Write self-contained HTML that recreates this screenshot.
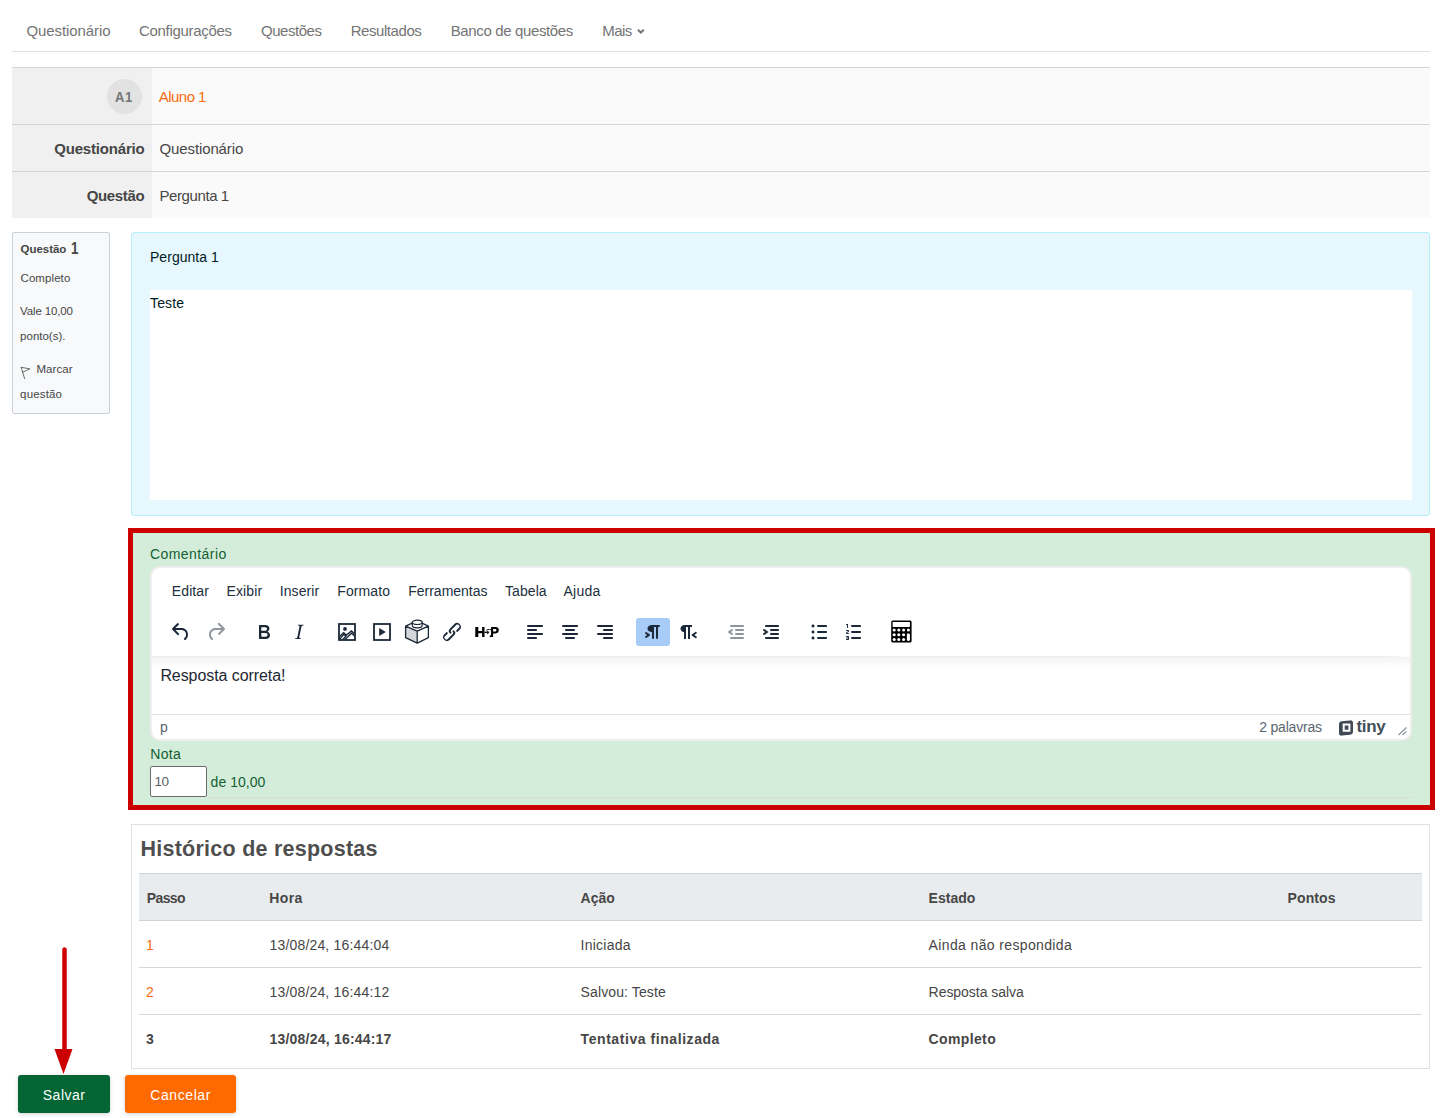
<!DOCTYPE html>
<html><head><meta charset="utf-8">
<style>
*{box-sizing:border-box;margin:0;padding:0}
html,body{width:1440px;height:1118px;overflow:hidden;background:#fff}
body{font-family:"Liberation Sans",sans-serif;position:relative}
.a{position:absolute}
.t{position:absolute;white-space:nowrap;line-height:1}
svg.a{overflow:visible}
</style></head><body>
<span class="t" style="left:26.50px;top:22.70px;font-size:15px;color:#747474;letter-spacing:-0.095px;">Questionário</span>
<span class="t" style="left:139.00px;top:22.70px;font-size:15px;color:#747474;letter-spacing:-0.310px;">Configurações</span>
<span class="t" style="left:261.00px;top:22.70px;font-size:15px;color:#747474;letter-spacing:-0.458px;">Questões</span>
<span class="t" style="left:350.70px;top:22.70px;font-size:15px;color:#747474;letter-spacing:-0.438px;">Resultados</span>
<span class="t" style="left:450.70px;top:22.70px;font-size:15px;color:#747474;letter-spacing:-0.364px;">Banco de questões</span>
<span class="t" style="left:602.20px;top:22.70px;font-size:15px;color:#747474;letter-spacing:-0.557px;">Mais</span>
<svg class="a" style="left:637px;top:28px" width="8" height="7" viewBox="0 0 8 7"><path d="M0.9 1.7 L3.85 4.6 L6.8 1.7" fill="none" stroke="#777" stroke-width="2.1"/></svg>
<div class="a" style="left:12px;top:51px;width:1418px;height:1px;background:#dee2e6"></div>
<div class="a" style="left:12px;top:67px;width:140px;height:57px;background:#f0f0f0"></div><div class="a" style="left:152px;top:67px;width:1278px;height:57px;background:#fafafa"></div>
<div class="a" style="left:12px;top:124px;width:140px;height:47px;background:#f0f0f0"></div><div class="a" style="left:152px;top:124px;width:1278px;height:47px;background:#fafafa"></div>
<div class="a" style="left:12px;top:171px;width:140px;height:47px;background:#f0f0f0"></div><div class="a" style="left:152px;top:171px;width:1278px;height:47px;background:#fafafa"></div>
<div class="a" style="left:12px;top:67px;width:1418px;height:1px;background:#d2d6da"></div>
<div class="a" style="left:12px;top:124px;width:1418px;height:1px;background:#d2d6da"></div>
<div class="a" style="left:12px;top:171px;width:1418px;height:1px;background:#d2d6da"></div>
<div class="a" style="left:107px;top:79px;width:35px;height:35px;border-radius:50%;background:#e2e2e2"></div>
<span class="t" style="left:115.00px;top:90.05px;font-size:14px;color:#747474;font-weight:bold;letter-spacing:-1.297px;transform:scaleX(0.93);transform-origin:0 0;letter-spacing:0.6px">A1</span>
<span class="t" style="left:158.80px;top:89.20px;font-size:15px;color:#f76c10;letter-spacing:-0.546px;">Aluno 1</span>
<span class="t" style="left:54.20px;top:140.80px;font-size:15px;color:#464646;font-weight:bold;letter-spacing:-0.183px;">Questionário</span>
<span class="t" style="left:159.50px;top:140.80px;font-size:15px;color:#464646;letter-spacing:-0.114px;">Questionário</span>
<span class="t" style="left:86.70px;top:188.10px;font-size:15px;color:#464646;font-weight:bold;letter-spacing:-0.336px;">Questão</span>
<span class="t" style="left:159.50px;top:188.10px;font-size:15px;color:#464646;letter-spacing:-0.410px;">Pergunta 1</span>
<div class="a" style="left:12px;top:232px;width:98px;height:182px;background:#f8f9fa;border:1px solid #cad0d7;border-radius:2px"></div>
<span class="t" style="left:20.50px;top:244.26px;font-size:11.5px;color:#464646;font-weight:bold;letter-spacing:-0.019px;">Questão</span>
<span class="t" style="left:71.10px;top:239.81px;font-size:17px;color:#464646;font-weight:bold;transform:scaleX(0.78);transform-origin:0 0;">1</span>
<span class="t" style="left:20.50px;top:272.86px;font-size:11.5px;color:#464646;letter-spacing:0.083px;">Completo</span>
<span class="t" style="left:20.10px;top:305.86px;font-size:11.5px;color:#464646;letter-spacing:-0.137px;">Vale 10,00</span>
<span class="t" style="left:20.10px;top:330.76px;font-size:11.5px;color:#464646;">ponto(s).</span>
<span class="t" style="left:36.40px;top:363.66px;font-size:11.5px;color:#464646;letter-spacing:0.104px;">Marcar</span>
<span class="t" style="left:20.10px;top:388.66px;font-size:11.5px;color:#464646;letter-spacing:0.163px;">questão</span>
<svg class="a" style="left:20px;top:366px" width="12" height="14" viewBox="0 0 12 14"><path d="M1.2 1.3 L4.6 12.6 M1.2 1.3 L9.9 2.9 L2.6 6.2" fill="none" stroke="#555" stroke-width="0.85" stroke-linejoin="round" stroke-linecap="round"/></svg>
<div class="a" style="left:131px;top:232px;width:1299px;height:284px;background:#e6f8fd;border:1px solid #b5effa;border-radius:3px"></div>
<div class="a" style="left:150px;top:290px;width:1262px;height:210px;background:#fff"></div>
<span class="t" style="left:150.00px;top:250.15px;font-size:14px;color:#001a1e;letter-spacing:0.034px;">Pergunta 1</span>
<span class="t" style="left:150.00px;top:295.75px;font-size:14px;color:#001a1e;letter-spacing:0.160px;">Teste</span>
<div class="a" style="left:131px;top:530px;width:1299px;height:277px;background:#d4ecda"></div>
<span class="t" style="left:150.00px;top:546.90px;font-size:14px;color:#155f33;letter-spacing:0.432px;">Comentário</span>
<div class="a" style="left:150px;top:566px;width:1262px;height:175px;background:#fff;border:2px solid #eeeeee;border-radius:10px"></div>
<span class="t" style="left:171.80px;top:583.95px;font-size:14px;color:#222f3e;letter-spacing:0.105px;">Editar</span>
<span class="t" style="left:226.50px;top:583.95px;font-size:14px;color:#222f3e;letter-spacing:0.139px;">Exibir</span>
<span class="t" style="left:279.80px;top:583.95px;font-size:14px;color:#222f3e;letter-spacing:0.067px;">Inserir</span>
<span class="t" style="left:337.30px;top:583.95px;font-size:14px;color:#222f3e;letter-spacing:0.096px;">Formato</span>
<span class="t" style="left:408.20px;top:583.95px;font-size:14px;color:#222f3e;">Ferramentas</span>
<span class="t" style="left:505.00px;top:583.95px;font-size:14px;color:#222f3e;letter-spacing:0.069px;">Tabela</span>
<span class="t" style="left:563.50px;top:583.95px;font-size:14px;color:#222f3e;letter-spacing:0.248px;">Ajuda</span>
<div class="a" style="left:152px;top:656px;width:1258px;height:1px;background:linear-gradient(90deg,rgba(34,47,62,.09) 0,rgba(34,47,62,.09) 98%,rgba(34,47,62,0))"></div>
<div class="a" style="left:152px;top:657px;width:1258px;height:10px;background:linear-gradient(rgba(34,47,62,.06),rgba(34,47,62,0))"></div>
<span class="t" style="left:160.40px;top:668.25px;font-size:16px;color:#1e2833;letter-spacing:-0.080px;">Resposta correta!</span>
<div class="a" style="left:152px;top:714px;width:1258px;height:1px;background:#e3e3e3"></div>
<span class="t" style="left:160.00px;top:719.85px;font-size:14px;color:#5b6670;">p</span>
<span class="t" style="left:1259.20px;top:719.75px;font-size:14px;color:#5b6670;letter-spacing:-0.199px;">2 palavras</span>
<svg class="a" style="left:1338px;top:720px" width="16" height="16" viewBox="0 0 16 16"><path d="M3.8 1.3 L12 0.4 Q15 0.1 15 3.1 L15 11.6 Q15 14.4 12.2 14.7 L4 15.6 Q1 15.9 1 12.9 L1 4.4 Q1 1.6 3.8 1.3 Z" fill="#3f4a56"/><path d="M4.7 3.6 L12.4 3.6 L12.4 11.8 L4.7 11.8 Z M6.7 5.6 L6.7 9.8 L10.4 9.8 L10.4 5.6 Z" fill="#fff" fill-rule="evenodd"/></svg>
<span class="t" style="left:1356.5px;top:717.5px;font-size:17px;font-weight:bold;color:#434e59;letter-spacing:-0.35px">tiny</span>
<svg class="a" style="left:1397px;top:726px" width="11" height="10" viewBox="0 0 11 10"><path d="M1.5 9 L9.5 1.5 M5.5 9 L9.5 5.3" stroke="#8a9096" stroke-width="1.1" fill="none"/></svg>
<div class="a" style="left:636px;top:618px;width:34px;height:28px;background:#a6ccf7;border-radius:3px"></div>
<svg class="a" style="left:169px;top:620px" width="24" height="24" viewBox="0 0 24 24"><path d="M6.4 8H12c3.7 0 6.2 2 6.8 5.1.6 2.7-.4 5.6-2.3 6.8a1 1 0 0 1-1-1.8c1.1-.7 1.8-2.6 1.4-4.6-.4-2.1-2-3.5-4.9-3.5H6.4l3.3 3.3a1 1 0 1 1-1.4 1.4l-5-5a1 1 0 0 1 0-1.4l5-5a1 1 0 0 1 1.4 1.4L6.4 8Z" fill="#1b2838"/></svg>
<svg class="a" style="left:204px;top:620px" width="24" height="24" viewBox="0 0 24 24"><path d="M17.6 10H12c-2.8 0-4.4 1.4-4.9 3.5-.4 2 .3 3.9 1.4 4.6a1 1 0 1 1-1 1.8c-2-1.2-2.9-4.1-2.3-6.8.6-3 3-5.1 6.8-5.1h5.6l-3.3-3.3a1 1 0 1 1 1.4-1.4l5 5a1 1 0 0 1 0 1.4l-5 5a1 1 0 0 1-1.4-1.4l3.3-3.3Z" fill="#8f969d"/></svg>
<svg class="a" style="left:252px;top:620px" width="24" height="24" viewBox="0 0 24 24"><path d="M7.8 19c-.3 0-.5 0-.6-.2l-.2-.5V5.7c0-.2 0-.4.2-.5l.6-.2h5c1.5 0 2.7.3 3.5 1 .7.6 1.1 1.4 1.1 2.5a3 3 0 0 1-.6 1.9c-.4.6-1 1-1.6 1.2.4.1.9.3 1.3.6s.8.7 1 1.2c.4.4.5 1 .5 1.6 0 1.3-.4 2.3-1.3 3-.8.7-2.1 1-3.8 1H7.8zm5-8.3c.6 0 1.2-.1 1.6-.5.4-.3.6-.7.6-1.3 0-1.1-.8-1.7-2.3-1.7H9.3v3.5h3.4zm.5 6c.7 0 1.3-.1 1.7-.4.4-.4.6-.9.6-1.5s-.2-1-.7-1.4c-.4-.3-1-.4-2-.4H9.4v3.7h4z" fill="#1b2838"/></svg>
<svg class="a" style="left:287px;top:620px" width="24" height="24" viewBox="0 0 24 24"><path d="M16.7 4.7l-.1.9h-.3c-.6 0-1 0-1.4.3-.3.3-.4.6-.5 1.1l-2.1 9.8v.6c0 .5.4.8 1.4.8h.2l-.2.8H8l.2-.8h.2c1.1 0 1.8-.5 2-1.5l2-9.8.1-.5c0-.6-.4-.8-1.4-.8h-.3l.2-.9h5.8z" fill="#1b2838"/></svg>
<svg class="a" style="left:335px;top:620px" width="24" height="24" viewBox="0 0 24 24"><rect x="4.0" y="4.0" width="16" height="16" fill="none" stroke="#1b2838" stroke-width="1.8"/><circle cx="10" cy="8.9" r="1.9" fill="#1b2838"/><path d="M4.6 16.6 L8.6 12.6 L11.4 15.1 L16.5 10.9 L19.6 14.1" fill="none" stroke="#1b2838" stroke-width="1.4" stroke-linejoin="miter"/><path d="M4.6 19.4 L8.6 14.2 L10.9 16.1 L7.6 19.8 M10 19.6 L16.5 13.2 L19.6 16" fill="none" stroke="#1b2838" stroke-width="1.4"/></svg>
<svg class="a" style="left:370px;top:620px" width="24" height="24" viewBox="0 0 24 24"><rect x="4.0" y="4.0" width="16" height="16" fill="none" stroke="#1b2838" stroke-width="1.8"/><path d="M9.2 8 L15.8 12 L9.2 16 Z" fill="#1b2838"/></svg>
<svg class="a" style="left:405px;top:620px" width="24" height="24" viewBox="0 0 24 24"><path d="M0.6 17.7 L0.6 6.1 L12.2 11.2 L12.2 23.2 Z" fill="#d4d6da"/><path d="M0.6 6.1 L12.2 0.9 L23.4 6.1 L23.4 17.7 L12.2 23.2 L0.6 17.7 Z M0.6 6.1 L12.2 11.2 L23.4 6.1 M12.2 11.2 L12.2 23.2" fill="none" stroke="#1b2838" stroke-width="1.3" stroke-linejoin="round"/><path d="M7.3 2.3 V5.6 A4.9 2.3 0 0 0 17.1 5.6 V2.3 Z" fill="#fff" stroke="#1b2838" stroke-width="1.2"/><ellipse cx="12.2" cy="2.3" rx="4.9" ry="2.2" fill="#fff" stroke="#1b2838" stroke-width="1.2"/></svg>
<svg class="a" style="left:440px;top:620px" width="24" height="24" viewBox="0 0 24 24"><path d="M6.2 12.3a1 1 0 0 1 1.4 1.4l-2.1 2a2 2 0 1 0 2.7 2.8l4.8-4.8a1 1 0 0 0 0-1.4 1 1 0 1 1 1.4-1.3 2.9 2.9 0 0 1 0 4L9.6 20a3.9 3.9 0 0 1-5.5-5.5l2-2zm11.6-.6a1 1 0 0 1-1.4-1.4l2-2a2 2 0 1 0-2.6-2.8L11 10.3a1 1 0 0 0 0 1.4A1 1 0 1 1 9.6 13a2.9 2.9 0 0 1 0-4L14.4 4a3.9 3.9 0 0 1 5.5 5.5l-2 2z" fill="#1b2838"/></svg>
<svg class="a" style="left:475px;top:620px" width="24" height="24" viewBox="0 0 24 24"><path d="M0.3 7 H3.3 V11.1 H7.1 V7 H9.5 V17 H7.1 V13.3 H3.3 V17 H0.3 Z" fill="#000"/><path d="M16.1 7 H20.5 C23.2 7 23.8 8.7 23.8 10.2 C23.8 12.2 22.3 13.5 20 13.5 H18.1 V17 H16.1 Z M18.1 8.9 V11.6 H19.9 C20.9 11.6 21.4 11 21.4 10.2 C21.4 9.4 20.9 8.9 19.9 8.9 Z" fill="#000" fill-rule="evenodd"/><path d="M9.5 12.3 H12.5" stroke="#000" stroke-width="1.3"/><path d="M12.2 10.2 L14.3 12.3 L12.2 14.4 Z" fill="#000"/><path d="M11.3 10.3 Q12 9.2 14.5 9.4 L16.8 9.8" fill="none" stroke="#000" stroke-width="0.9"/><path d="M16.2 11 C17.6 12.5 17.4 16.2 14.8 16.8" fill="none" stroke="#000" stroke-width="1.4"/></svg>
<svg class="a" style="left:523px;top:620px" width="24" height="24" viewBox="0 0 24 24"><path d="M5 5h14c.6 0 1 .4 1 1s-.4 1-1 1H5a1 1 0 1 1 0-2zm0 4h8c.6 0 1 .4 1 1s-.4 1-1 1H5a1 1 0 1 1 0-2zm0 8h8c.6 0 1 .4 1 1s-.4 1-1 1H5a1 1 0 0 1 0-2zm0-4h14c.6 0 1 .4 1 1s-.4 1-1 1H5a1 1 0 0 1 0-2z" fill="#1b2838"/></svg>
<svg class="a" style="left:558px;top:620px" width="24" height="24" viewBox="0 0 24 24"><path d="M5 5h14c.6 0 1 .4 1 1s-.4 1-1 1H5a1 1 0 1 1 0-2zm3 4h8c.6 0 1 .4 1 1s-.4 1-1 1H8a1 1 0 1 1 0-2zm0 8h8c.6 0 1 .4 1 1s-.4 1-1 1H8a1 1 0 0 1 0-2zm-3-4h14c.6 0 1 .4 1 1s-.4 1-1 1H5a1 1 0 0 1 0-2z" fill="#1b2838"/></svg>
<svg class="a" style="left:593px;top:620px" width="24" height="24" viewBox="0 0 24 24"><path d="M5 5h14c.6 0 1 .4 1 1s-.4 1-1 1H5a1 1 0 1 1 0-2zm6 4h8c.6 0 1 .4 1 1s-.4 1-1 1h-8a1 1 0 0 1 0-2zm0 8h8c.6 0 1 .4 1 1s-.4 1-1 1h-8a1 1 0 0 1 0-2zm-6-4h14c.6 0 1 .4 1 1s-.4 1-1 1H5a1 1 0 0 1 0-2z" fill="#1b2838"/></svg>
<svg class="a" style="left:641px;top:620px" width="24" height="24" viewBox="0 0 24 24"><path d="M11 5h7a1 1 0 0 1 0 2h-1v11a1 1 0 0 1-2 0V7h-2v11a1 1 0 0 1-2 0v-6c-.5 0-1 0-1.4-.3A3.4 3.4 0 0 1 6.8 10a3.3 3.3 0 0 1 0-2.8 3.4 3.4 0 0 1 1.8-1.8L11 5zM4.4 16.2 6.2 15l-1.8-1.2a1 1 0 0 1 1.2-1.6l3 2a1 1 0 0 1 0 1.6l-3 2a1 1 0 1 1-1.2-1.6z" fill="#1b2838"/></svg>
<svg class="a" style="left:676px;top:620px" width="24" height="24" viewBox="0 0 24 24"><path d="M8 5h8v2h-2v12h-2V7h-2v12H8v-7c-.5 0-1 0-1.4-.3A3.4 3.4 0 0 1 4.8 10a3.3 3.3 0 0 1 0-2.8 3.4 3.4 0 0 1 1.8-1.8L8 5zm12 11.2a1 1 0 1 1-1 1.6l-3-2a1 1 0 0 1 0-1.6l3-2a1 1 0 1 1 1 1.6L18.4 15l1.6 1.2z" fill="#1b2838"/></svg>
<svg class="a" style="left:724px;top:620px" width="24" height="24" viewBox="0 0 24 24"><path d="M7 5h12c.6 0 1 .4 1 1s-.4 1-1 1H7a1 1 0 1 1 0-2zm5 4h7c.6 0 1 .4 1 1s-.4 1-1 1h-7a1 1 0 0 1 0-2zm0 4h7c.6 0 1 .4 1 1s-.4 1-1 1h-7a1 1 0 0 1 0-2zm-5 4h12a1 1 0 0 1 0 2H7a1 1 0 0 1 0-2zm1.6-3.8a1 1 0 0 1-1.2 1.6l-3-2a1 1 0 0 1 0-1.6l3-2a1 1 0 0 1 1.2 1.6L6.8 12l1.8 1.2z" fill="#8f969d"/></svg>
<svg class="a" style="left:759px;top:620px" width="24" height="24" viewBox="0 0 24 24"><path d="M7 5h12c.6 0 1 .4 1 1s-.4 1-1 1H7a1 1 0 1 1 0-2zm5 4h7c.6 0 1 .4 1 1s-.4 1-1 1h-7a1 1 0 0 1 0-2zm0 4h7c.6 0 1 .4 1 1s-.4 1-1 1h-7a1 1 0 0 1 0-2zm-5 4h12a1 1 0 0 1 0 2H7a1 1 0 0 1 0-2zm-2.6-3.8L6.2 12l-1.8-1.2a1 1 0 0 1 1.2-1.6l3 2a1 1 0 0 1 0 1.6l-3 2a1 1 0 1 1-1.2-1.6z" fill="#1b2838"/></svg>
<svg class="a" style="left:807px;top:620px" width="24" height="24" viewBox="0 0 24 24"><path d="M11 5h8c.6 0 1 .4 1 1s-.4 1-1 1h-8a1 1 0 0 1 0-2zm0 6h8c.6 0 1 .4 1 1s-.4 1-1 1h-8a1 1 0 0 1 0-2zm0 6h8c.6 0 1 .4 1 1s-.4 1-1 1h-8a1 1 0 0 1 0-2zM4.5 6c0-.4.1-.8.4-1 .3-.4.7-.5 1.1-.5.4 0 .8.1 1 .4.4.3.5.7.5 1.1 0 .4-.1.8-.4 1-.3.4-.7.5-1.1.5-.4 0-.8-.1-1-.4-.4-.3-.5-.7-.5-1.1zm0 6c0-.4.1-.8.4-1 .3-.4.7-.5 1.1-.5.4 0 .8.1 1 .4.4.3.5.7.5 1.1 0 .4-.1.8-.4 1-.3.4-.7.5-1.1.5-.4 0-.8-.1-1-.4-.4-.3-.5-.7-.5-1.1zm0 6c0-.4.1-.8.4-1 .3-.4.7-.5 1.1-.5.4 0 .8.1 1 .4.4.3.5.7.5 1.1 0 .4-.1.8-.4 1-.3.4-.7.5-1.1.5-.4 0-.8-.1-1-.4-.4-.3-.5-.7-.5-1.1z" fill="#1b2838"/></svg>
<svg class="a" style="left:842px;top:620px" width="24" height="24" viewBox="0 0 24 24"><path d="M10 17h8c.6 0 1 .4 1 1s-.4 1-1 1h-8a1 1 0 0 1 0-2zm0-6h8c.6 0 1 .4 1 1s-.4 1-1 1h-8a1 1 0 0 1 0-2zm0-6h8c.6 0 1 .4 1 1s-.4 1-1 1h-8a1 1 0 1 1 0-2zM6 4v3.5c0 .3-.2.5-.5.5a.5.5 0 0 1-.5-.5V5h-.5a.5.5 0 0 1 0-1H6zm-1 8.8.2.2h1.3c.3 0 .5.2.5.5s-.2.5-.5.5H4.9a1 1 0 0 1-.9-1V13c0-.4.3-.8.6-1l1.2-.4.2-.3a.2.2 0 0 0-.2-.2H4.5a.5.5 0 0 1-.5-.5c0-.3.2-.5.5-.5h1.6c.5 0 .9.4.9 1v.1c0 .4-.3.8-.6 1l-1.2.4-.2.3zM7 17v2c0 .6-.4 1-1 1H4.5a.5.5 0 0 1 0-1h1.2c.2 0 .3-.1.3-.3 0-.2-.1-.3-.3-.3H4.4a.4.4 0 1 1 0-.8h1.3c.2 0 .3-.1.3-.3 0-.2-.1-.3-.3-.3H4.5a.5.5 0 1 1 0-1H6c.6 0 1 .4 1 1z" fill="#1b2838"/></svg>
<svg class="a" style="left:890px;top:620px" width="24" height="24" viewBox="0 0 24 24"><rect x="1.2" y="0.5" width="20.4" height="22" rx="1.6" fill="#000"/><rect x="2.6" y="2" width="17.3" height="4.9" rx="0.6" fill="#fff"/><circle cx="4.2" cy="10" r="1.55" fill="#fff"/><circle cx="4.2" cy="14.7" r="1.55" fill="#fff"/><circle cx="4.2" cy="19.5" r="1.55" fill="#fff"/><circle cx="8.8" cy="10" r="1.55" fill="#fff"/><circle cx="8.8" cy="14.7" r="1.55" fill="#fff"/><circle cx="8.8" cy="19.5" r="1.55" fill="#fff"/><circle cx="13.6" cy="10" r="1.55" fill="#fff"/><circle cx="13.6" cy="14.7" r="1.55" fill="#fff"/><circle cx="13.6" cy="19.5" r="1.55" fill="#fff"/><circle cx="18.4" cy="10" r="1.55" fill="#fff"/><rect x="16.85" y="13.2" width="3.1" height="7.8" rx="1.55" fill="#fff"/></svg>
<span class="t" style="left:150.20px;top:746.85px;font-size:14px;color:#155f33;letter-spacing:0.376px;">Nota</span>
<div class="a" style="left:150px;top:766px;width:57px;height:31px;background:#fff;border:1px solid #6c6c6c;border-radius:2px"></div>
<span class="t" style="left:154.40px;top:775.27px;font-size:13.5px;color:#5a6169;letter-spacing:-0.316px;">10</span>
<span class="t" style="left:210.60px;top:774.85px;font-size:14px;color:#155f33;letter-spacing:0.029px;">de 10,00</span>
<div class="a" style="left:207px;top:797px;width:1205px;height:1px;background:#d9dcdc"></div>
<div class="a" style="left:128px;top:528px;width:1307px;height:282px;border:5px solid #cc0000"></div>
<div class="a" style="left:131px;top:824px;width:1299px;height:245px;border:1px solid #dee2e6"></div>
<span class="t" style="left:140.50px;top:839.30px;font-size:21.5px;color:#4e4e4e;font-weight:bold;letter-spacing:0.248px;">Histórico de respostas</span>
<div class="a" style="left:139px;top:873px;width:1283px;height:48px;background:#e9ecef;border-top:1px solid #cdd2d6;border-bottom:1px solid #cdd2d6"></div>
<div class="a" style="left:139px;top:967px;width:1283px;height:1px;background:#d5d9dc"></div>
<div class="a" style="left:139px;top:1014px;width:1283px;height:1px;background:#d5d9dc"></div>
<span class="t" style="left:146.70px;top:890.95px;font-size:14px;color:#464646;font-weight:bold;letter-spacing:-0.587px;">Passo</span>
<span class="t" style="left:269.30px;top:890.95px;font-size:14px;color:#464646;font-weight:bold;letter-spacing:0.334px;">Hora</span>
<span class="t" style="left:580.60px;top:890.95px;font-size:14px;color:#464646;font-weight:bold;">Ação</span>
<span class="t" style="left:928.60px;top:890.95px;font-size:14px;color:#464646;font-weight:bold;">Estado</span>
<span class="t" style="left:1287.60px;top:890.95px;font-size:14px;color:#464646;font-weight:bold;letter-spacing:0.092px;">Pontos</span>
<span class="t" style="left:146.00px;top:938.05px;font-size:14px;color:#f76c10;">1</span>
<span class="t" style="left:269.50px;top:938.05px;font-size:14px;color:#464646;letter-spacing:0.172px;">13/08/24, 16:44:04</span>
<span class="t" style="left:580.60px;top:938.05px;font-size:14px;color:#464646;letter-spacing:0.235px;">Iniciada</span>
<span class="t" style="left:928.60px;top:938.05px;font-size:14px;color:#464646;letter-spacing:0.367px;">Ainda não respondida</span>
<span class="t" style="left:146.00px;top:985.05px;font-size:14px;color:#f76c10;">2</span>
<span class="t" style="left:269.50px;top:985.05px;font-size:14px;color:#464646;letter-spacing:0.172px;">13/08/24, 16:44:12</span>
<span class="t" style="left:580.60px;top:985.05px;font-size:14px;color:#464646;letter-spacing:0.109px;">Salvou: Teste</span>
<span class="t" style="left:928.60px;top:985.05px;font-size:14px;color:#464646;letter-spacing:-0.040px;">Resposta salva</span>
<span class="t" style="left:146.00px;top:1032.05px;font-size:14px;color:#464646;font-weight:bold;">3</span>
<span class="t" style="left:269.50px;top:1032.05px;font-size:14px;color:#464646;font-weight:bold;letter-spacing:0.211px;">13/08/24, 16:44:17</span>
<span class="t" style="left:580.60px;top:1032.05px;font-size:14px;color:#464646;font-weight:bold;letter-spacing:0.563px;">Tentativa finalizada</span>
<span class="t" style="left:928.60px;top:1032.05px;font-size:14px;color:#464646;font-weight:bold;letter-spacing:0.364px;">Completo</span>
<div class="a" style="left:18px;top:1075px;width:92px;height:38px;background:#036533;border-radius:3px;box-shadow:0 1px 4px rgba(0,0,0,.18)"></div>
<div class="a" style="left:125px;top:1075px;width:111px;height:38px;background:#ff6a00;border-radius:3px;box-shadow:0 1px 4px rgba(0,0,0,.18)"></div>
<span class="t" style="left:42.80px;top:1087.95px;font-size:14px;color:#fff;letter-spacing:0.483px;">Salvar</span>
<span class="t" style="left:150.20px;top:1087.95px;font-size:14px;color:#fff;letter-spacing:0.596px;">Cancelar</span>
<svg class="a" style="left:0;top:940px" width="140" height="140" viewBox="0 940 140 140"><line x1="64.5" y1="949.5" x2="64.5" y2="1052" stroke="#cc0000" stroke-width="4.5" stroke-linecap="round"/><path d="M54.5 1049 L72.5 1049 L63.5 1074 Z" fill="#cc0000"/></svg>
</body></html>
